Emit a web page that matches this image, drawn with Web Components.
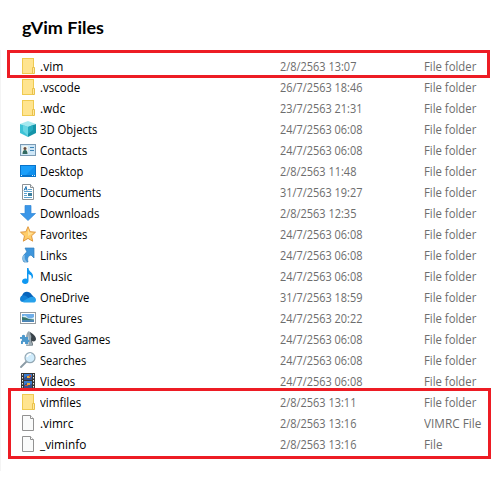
<!DOCTYPE html>
<html lang="en"><head><meta charset="utf-8"><title>gVim Files</title>
<style>html,body{margin:0;background:#fff}body{width:500px;height:501px;overflow:hidden}</style></head>
<body><file-window heading="gVim Files"></file-window>
<script>
const ICONS={
folder:`<rect x="2.500" y=".5" width="11" height="15" fill="#ffe48f" stroke="#efca50"/><path d="M12.500 15.500v-6h2v6z" fill="#ffe9a2" stroke="#e9c14a"/>`,
cube:`<path d="M0 3l8-3 8 3-8 3.500z" fill="#a5e9ef"/><path d="M0 3l8 3v10l-8-4z" fill="#3dc3d6"/><path d="M8 6l8-3v9l-8 4z" fill="#1594a8"/><path d="M3 4l5 2v9l-5-5z" fill="#68d6e3"/><path d="M8 6l5-2v5l-5 4z" fill="#25abc0"/>`,
contacts:`<rect x=".5" y="2.500" width="15" height="11" fill="#cfe7f7" stroke="#7b9bb4"/><rect x="2" y="4" width="6" height="8" fill="#f0f5ef"/><circle cx="5" cy="6.500" r="1.500" fill="#674b3c"/><path d="M2.500 12q0-4 2.500-4t2.500 4z" fill="#326a62"/><path d="M10 5.500h4M10 8.500h4" stroke="#3f86b8"/>`,
desktop:`<path d="M0 2h16v12H0z" fill="#0873ca"/><path d="M1 3h14v9H1z" fill="#1b9ffa"/><path d="M15 3v9H6z" fill="#0f90ee"/><path d="M1 12.500h1M12 12.500h1M14 12.500h1" stroke="#d5efff"/>`,
docs:`<path d="M2.500.5h8l3 3v12h-11z" fill="#fff" stroke="#8c9296"/><path d="M10.500.5v3h3" fill="#eee" stroke="#8c9296"/><path d="M4 6.500l2-4 1 4M4.600 5H7" fill="none" stroke="#2678b5"/><path d="M8 5.500h4M4 7.500h8M4 9.500h3M4 11.500h3M4 13.500h8" stroke="#5da3d0"/><path d="M8 9h4v3H8z" fill="#3d7f9e"/>`,
down:`<path d="M5 .5h6v8h4.500L8 15.500.5 8.500H5z" fill="#3a96e8" stroke="#3087d4" stroke-width=".7"/>`,
star:`<path d="M8 .7l2.100 5 5.400.5-4 3.600 1.200 5.400L8 12.400l-4.700 2.800 1.200-5.400-4-3.600 5.400-.5z" fill="#ffcd68" stroke="#df9840"/><path d="M8 2.500l1.300 4 4 .5-5.300 3z" fill="#ffe09a"/>`,
link:`<path d="M5 1h9v10l-3-3c-3 1-4 3-3 7H4C1 11 4 7 7 5z" fill="#3f96dc" stroke="#3180bd" stroke-width=".7"/><path d="M2.600 9C2 11 3 14 5 15h2c-2-2-3-4-2-7z" fill="#8dbfe2"/>`,
music:`<path d="M7 0h1.500c0 4 5 4 4.500 9-.3 1.200-1 2-1.500 2 .6-3-.5-4-3-5v7C8.500 17 2 16.500 2 13.500 2 11 5 10 7 11z" fill="#0f98f2"/>`,
cloud:`<path d="M2 7c1-5 7-6 10-1l3 3-5 4H3z" fill="#0864bb"/><path d="M0 10c0-3 3-5 6-3l7 6H3c-2 0-3-1-3-3z" fill="#1280d6"/><path d="M2 12.700l7-4c3-2 7-.5 7 2 0 2-1 2.800-3 2.800H4z" fill="#27a1eb"/>`,
pictures:`<rect x=".5" y="2.500" width="15" height="11" fill="#fff" stroke="#969da1"/><path d="M2 4h12v8H2z" fill="#6faee8"/><path d="M2 7q3-3 5 0t7 0v3H2z" fill="#d7edf3"/><path d="M2 7q4 0 7 2l5 .5v1H2z" fill="#36766f"/><path d="M2 10.500h12V12H2z" fill="#4a83b6"/>`,
games:`<path d="M10 1c3 2 6 4 6 7 0 2-2 3-4 2l1 4H8z" fill="#39434a"/><path d="M9 0c1 1 1.500 2 1.500 3.500C12 5 11 7 11 8c0 2 1 4 2 7H6c1-3 1-6 0-9C6 4 7 1 9 0z" fill="#9aa8b0"/><path d="M9 3v11H7l1-6z" fill="#c3ced4"/><path d="M0 6h2c-1-3 4-3 3 0h3v3c2-1 2 3 0 2v2H5c1-3-3-3-2 0H1v-3c2 0 1-3-1-2z" fill="#4c98cc"/>`,
search:`<path d="M6.500 9.500L1 15" stroke="#8b9ba5" stroke-width="1.800" stroke-linecap="round"/><circle cx="10" cy="5.700" r="5" fill="#d0ecfc" stroke="#93a7b3" stroke-width="1.200"/><path d="M7 5q1-3 4-3" fill="none" stroke="#fff" stroke-width="1.500"/>`,
video:`<path d="M1 0h14v16H1z" fill="#353535"/><path d="M4 1h8v6H4zM4 8h8v7H4z" fill="#397cce"/><path d="M4 5l3-2 2 2 3-1v3H4zM4 12l3-2 2 2 3-1v4H4z" fill="#37508a"/><path d="M7 3h3v2H7zM7 10h3v2H7z" fill="#e8aa34"/><path d="M9 2h2v2H9zM5 12h3v1H5z" fill="#c94b37"/><path d="M2.500 1v15M13.500 1v15" stroke="#eee" stroke-dasharray="1.500 1.500"/>`,
file:`<path d="M2.500.5h8l3 3v12h-11z" fill="#fafbfb" stroke="#929292"/><path d="M10.500.5v3h3" fill="#fff" stroke="#929292"/>`
};
class FileIcon extends HTMLElement{connectedCallback(){this.attachShadow({mode:'open'}).innerHTML=`<style>:host{display:block;width:16px;height:16px}svg{display:block}</style><svg width="16" height="16" viewBox="0 0 16 16">${ICONS[this.getAttribute('kind')]}</svg>`}}
customElements.define('file-icon',FileIcon);
/* A single-line label whose glyph run fills the given width. */
class FitLabel extends HTMLElement{connectedCallback(){
this.attachShadow({mode:'open'}).innerHTML=`<style>:host{display:block;white-space:nowrap}span{display:inline-block;transform-origin:0 50%}</style><span><slot></slot></span>`;
const s=this.shadowRoot.querySelector('span');s.style.transform=`scaleX(${+this.getAttribute('fit')/s.getBoundingClientRect().width})`}}
customElements.define('fit-label',FitLabel);
class FileRow extends HTMLElement{connectedCallback(){const a=n=>this.getAttribute(n),d=a('date'),t=a('type');
this.attachShadow({mode:'open'}).innerHTML=`<style>:host{display:grid;grid-template-columns:20px 240px 144px 76px;height:21px;align-items:center;font:12px/21px "Open Sans","Noto Sans",sans-serif;color:#6d6d6d}.n{color:#000}file-icon{margin-top:-1px}</style><file-icon kind="${a('icon')}"></file-icon><fit-label class="n" fit="${a('fit')-.7}">${a('name')}</fit-label><fit-label fit="${d.length==15?82.4:76.4}">${d}</fit-label><fit-label fit="${{'File folder':52.3,'VIMRC File':57.3,'File':18.5}[t]}">${t}</fit-label>`}}
customElements.define('file-row',FileRow);
class MarkBox extends HTMLElement{connectedCallback(){this.attachShadow({mode:'open'}).innerHTML=`<style>:host{display:block;position:absolute;box-sizing:border-box;width:483px;border:3px solid #ed1c24}</style>`}}
customElements.define('mark-box',MarkBox);
class FileWindow extends HTMLElement{connectedCallback(){
const A='24/7/2563 06:08',F='File folder',rows=[
['folder','.vim',24,'2/8/2563 13:07'],['folder','.vscode',41,'26/7/2563 18:46'],['folder','.wdc',26,'23/7/2563 21:31'],['cube','3D Objects',58,A],['contacts','Contacts',48,A],['desktop','Desktop',44,'2/8/2563 11:48'],['docs','Documents',62,'31/7/2563 19:27'],['down','Downloads',60,'2/8/2563 12:35'],['star','Favorites',48,A],['link','Links',28,A],['music','Music',33,A],['cloud','OneDrive',50,'31/7/2563 18:59'],['pictures','Pictures',43,'24/7/2563 20:22'],['games','Saved Games',71,A],['search','Searches',47,A],['video','Videos',36,A],['folder','vimfiles',42,'2/8/2563 13:11'],['file','.vimrc',34,'2/8/2563 13:16','VIMRC File'],['file','_viminfo',47,'2/8/2563 13:16','File']];
this.attachShadow({mode:'open'}).innerHTML=`<style>:host{display:block;position:relative;height:501px}header{box-sizing:border-box;height:50px;padding:16px 0 0 22px;font:bold 17.500px/24px Lato,sans-serif;color:#000}main{box-sizing:border-box;height:421px;padding:6px 0 0 19px;border-left:1px solid #f4f4f4}.a{left:7px;top:50px;height:28px}.b{left:8px;top:388px;height:71px}</style><header><fit-label fit="82">${this.getAttribute('heading')}</fit-label></header><main>${rows.map(r=>`<file-row icon="${r[0]}" name="${r[1]}" fit="${r[2]}" date="${r[3]}" type="${r[4]||F}"></file-row>`).join('')}</main><mark-box class="a"></mark-box><mark-box class="b"></mark-box>`}}
customElements.define('file-window',FileWindow);
</script></body></html>
